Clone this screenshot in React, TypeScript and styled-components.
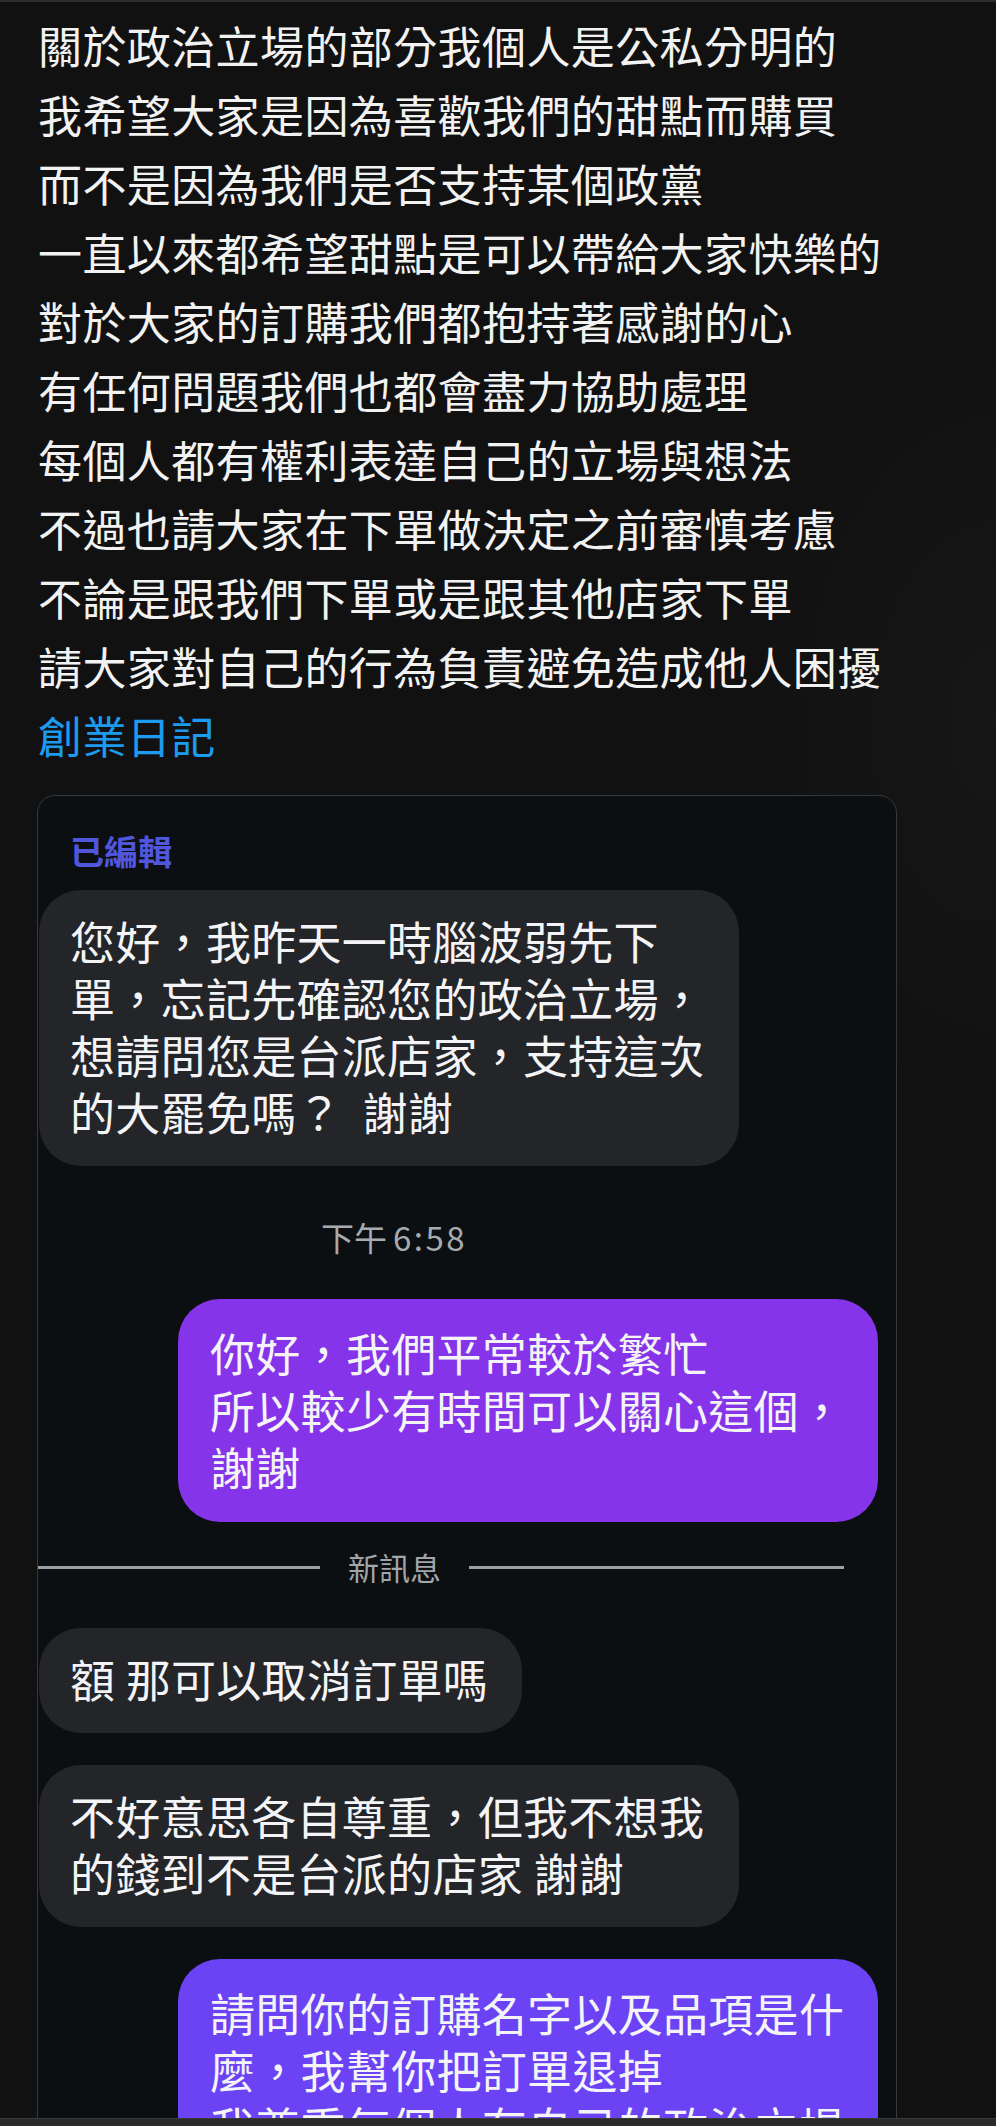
import React from "react";
import styled, { createGlobalStyle } from "styled-components";

const GlobalStyle = createGlobalStyle`
  html, body {
    margin: 0;
    padding: 0;
    background: #111111;
  }
  * { box-sizing: border-box; }
  body {
    font-family: "Noto Sans CJK TC", "Noto Sans", sans-serif;
    -webkit-font-smoothing: antialiased;
  }
`;

const Page = styled.div`
  width: 996px;
  height: 2126px;
  display: flex;
  flex-direction: column;
  overflow: hidden;
  background:
    radial-gradient(ellipse 260px 420px at 100% 34%, rgba(255, 255, 255, 0.025), transparent 100%),
    #111111;
`;

const TopRule = styled.div`
  height: 2px;
  flex: none;
  background: #2d2d2d;
`;

const BottomRule = styled.div`
  height: 8px;
  flex: none;
  background: #2a2a2a;
  border-top: 1px solid #3a3a3a;
`;

const Content = styled.main`
  flex: 1;
  min-height: 0;
  overflow: hidden;
  padding: 9px 0 0 38px;
`;

const PostText = styled.div`
  font-size: 44px;
  line-height: 69px;
  letter-spacing: 0.4px;
  color: #f2f2f2;
  white-space: nowrap;
`;

const Line = styled.div``;

const Hashtag = styled.div`
  color: #1d9bf0;
`;

const Card = styled.section`
  margin: 25px 0 0 -1px;
  width: 860px;
  background: #0c0f12;
  border: 1px solid #35383d;
  border-radius: 18px 18px 0 0;
  padding: 35px 18px 60px 0;
  display: flex;
  flex-direction: column;
`;

const EditedLabel = styled.div`
  margin-left: 32px;
  font-size: 34px;
  line-height: 50px;
  margin-top: -5px;
  margin-bottom: -5px;
  font-weight: 600;
  color: #5157dc;
`;

const Bubble = styled.div<{ $out?: boolean; $wide?: boolean; $tone?: string }>`
  align-self: ${(p) => (p.$out ? "flex-end" : "flex-start")};
  margin-left: ${(p) => (p.$out ? "0" : "1px")};
  width: ${(p) => (p.$wide ? "700px" : "auto")};
  max-width: 700px;
  background: ${(p) => p.$tone ?? "#232529"};
  color: #f4f4f6;
  border-radius: 42px;
  padding: ${(p) => (p.$out ? "25px 31px 27px 32px" : "22px 34px 26px 31px")};
  font-size: 45px;
  line-height: 57px;
  letter-spacing: 0.3px;
  white-space: pre;
`;

const Timestamp = styled.div`
  margin-left: 283px;
  font-size: 33px;
  line-height: 48px;
  margin-top: -4px;
  margin-bottom: -4px;
  color: #a7abaf;
  white-space: nowrap;
`;

const TimeDigits = styled.span`
  margin-left: 6px;
  letter-spacing: 2.5px;
`;

const Divider = styled.div`
  display: grid;
  grid-template-columns: 282px max-content 375px;
  justify-content: start;
  column-gap: 28px;
  align-items: center;
  height: 46px;
`;

const DividerLine = styled.div`
  height: 3px;
  background: #9aa0a6;
`;

const DividerLabel = styled.div`
  font-size: 31px;
  line-height: 46px;
  color: #a2a6ab;
  white-space: nowrap;
`;

const Gap = styled.div<{ $h: number }>`
  height: ${(p) => p.$h}px;
  flex: none;
`;

const postLines = [
  "關於政治立場的部分我個人是公私分明的",
  "我希望大家是因為喜歡我們的甜點而購買",
  "而不是因為我們是否支持某個政黨",
  "一直以來都希望甜點是可以帶給大家快樂的",
  "對於大家的訂購我們都抱持著感謝的心",
  "有任何問題我們也都會盡力協助處理",
  "每個人都有權利表達自己的立場與想法",
  "不過也請大家在下單做決定之前審慎考慮",
  "不論是跟我們下單或是跟其他店家下單",
  "請大家對自己的行為負責避免造成他人困擾",
];

export default function App() {
  return (
    <>
      <GlobalStyle />
      <Page>
        <TopRule />
        <Content>
          <PostText>
            {postLines.map((l) => (
              <Line key={l}>{l}</Line>
            ))}
            <Hashtag>創業日記</Hashtag>
          </PostText>
          <Card>
            <EditedLabel>已編輯</EditedLabel>
            <Gap $h={19} />
            <Bubble $wide>
              {"您好，我昨天一時腦波弱先下\n單，忘記先確認您的政治立場，\n想請問您是台派店家，支持這次\n的大罷免嗎？  謝謝"}
            </Bubble>
            <Gap $h={51} />
            <Timestamp>
              下午<TimeDigits>6:58</TimeDigits>
            </Timestamp>
            <Gap $h={42} />
            <Bubble $out $wide $tone="#8634ea">
              {"你好，我們平常較於繁忙\n所以較少有時間可以關心這個，\n謝謝"}
            </Bubble>
            <Gap $h={22} />
            <Divider>
              <DividerLine />
              <DividerLabel>新訊息</DividerLabel>
              <DividerLine />
            </Divider>
            <Gap $h={38} />
            <Bubble>{"額 那可以取消訂單嗎"}</Bubble>
            <Gap $h={32} />
            <Bubble $wide>{"不好意思各自尊重，但我不想我\n的錢到不是台派的店家 謝謝"}</Bubble>
            <Gap $h={32} />
            <Bubble $out $wide $tone="#6b43f5">
              {"請問你的訂購名字以及品項是什\n麼，我幫你把訂單退掉\n我尊重每個人有自己的政治立場\n但請不要影響到我們"}
            </Bubble>
          </Card>
        </Content>
        <BottomRule />
      </Page>
    </>
  );
}
